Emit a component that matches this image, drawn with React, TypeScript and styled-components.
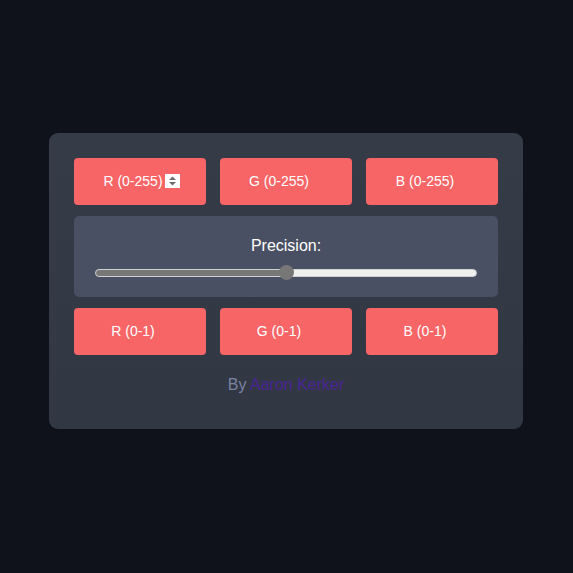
import React, { useState } from 'react';
import styled, { createGlobalStyle } from 'styled-components';

const GlobalStyle = createGlobalStyle`
  html, body {
    margin: 0;
    padding: 0;
    background: #0f121b;
    font-family: "Liberation Sans", Arial, sans-serif;
  }
`;

const Page = styled.div`
  display: flex;
  align-items: center;
  justify-content: center;
  width: 573px;
  height: 573px;
`;

const Card = styled.div`
  box-sizing: border-box;
  width: 474px;
  height: 296px;
  margin: -12px 1px 0 0;
  padding: 25px;
  border-radius: 9px;
  background: linear-gradient(#363b48, #323744);
  display: flex;
  flex-direction: column;
  gap: 11px;
`;

const Row = styled.div`
  display: grid;
  grid-template-columns: repeat(3, 132px);
  gap: 14px;
`;

const Cell = styled.div`
  position: relative;
`;

const ValueInput = styled.input`
  box-sizing: border-box;
  width: 100%;
  height: 47px;
  padding: 0 21px 0 7px;
  border: none;
  border-radius: 4px;
  background: #f76567;
  color: #fff;
  font-family: "Liberation Sans", Arial, sans-serif;
  font-size: 14px;
  text-align: center;
  outline: none;
  -moz-appearance: textfield;

  &::placeholder {
    color: #fff;
    opacity: 1;
  }
  &::-webkit-inner-spin-button,
  &::-webkit-outer-spin-button {
    -webkit-appearance: none;
    margin: 0;
  }
`;

const Spinner = styled.svg`
  position: absolute;
  left: 91px;
  top: 16px;
  width: 15px;
  height: 14px;
`;

const PrecisionPanel = styled.div`
  box-sizing: border-box;
  height: 81px;
  padding: 21px 21px 0;
  border-radius: 5px;
  background: #4a5063;
  display: flex;
  flex-direction: column;
  align-items: center;
  gap: 14px;
`;

const Label = styled.div`
  color: #fff;
  font-size: 16px;
  line-height: 18px;
`;

const Range = styled.input`
  -webkit-appearance: none;
  appearance: none;
  width: 100%;
  height: 8px;
  margin: 0;
  border-radius: 4px;
  border: 1px solid #d0d0d0;
  box-sizing: border-box;
  outline: none;

  &::-webkit-slider-thumb {
    -webkit-appearance: none;
    width: 15px;
    height: 15px;
    border-radius: 50%;
    background: #777777;
    border: none;
  }
`;

const Footer = styled.div`
  margin-top: 10px;
  text-align: center;
  font-size: 16px;
  color: #7a83a2;
`;

const Author = styled.a`
  color: #4b2596;
  text-decoration: none;
`;

const rgb = ['R (0-255)', 'G (0-255)', 'B (0-255)'];
const unit = ['R (0-1)', 'G (0-1)', 'B (0-1)'];

export default function App() {
  const [precision, setPrecision] = useState(50);
  const fill = `linear-gradient(to right, #777777 0%, #777777 ${precision}%, #efefef ${precision}%, #efefef 100%)`;

  return (
    <Page>
      <GlobalStyle />
      <Card>
        <Row>
          {rgb.map((p, i) => (
            <Cell key={p}>
              <ValueInput type="number" placeholder={p} />
              {i === 0 && (
                <Spinner viewBox="0 0 15 14">
                  <rect width="15" height="14" fill="#ffffff" />
                  <path d="M7.5 2.5 L11 6 L4 6 Z" fill="#6e6e6e" />
                  <path d="M7.5 11.5 L11 8 L4 8 Z" fill="#6e6e6e" />
                </Spinner>
              )}
            </Cell>
          ))}
        </Row>
        <PrecisionPanel>
          <Label>Precision:</Label>
          <Range
            type="range"
            min={0}
            max={100}
            value={precision}
            onChange={(e) => setPrecision(Number(e.target.value))}
            style={{ background: fill }}
          />
        </PrecisionPanel>
        <Row>
          {unit.map((p) => (
            <Cell key={p}>
              <ValueInput type="number" placeholder={p} />
            </Cell>
          ))}
        </Row>
        <Footer>
          By <Author href="#">Aaron Kerker</Author>
        </Footer>
      </Card>
    </Page>
  );
}
